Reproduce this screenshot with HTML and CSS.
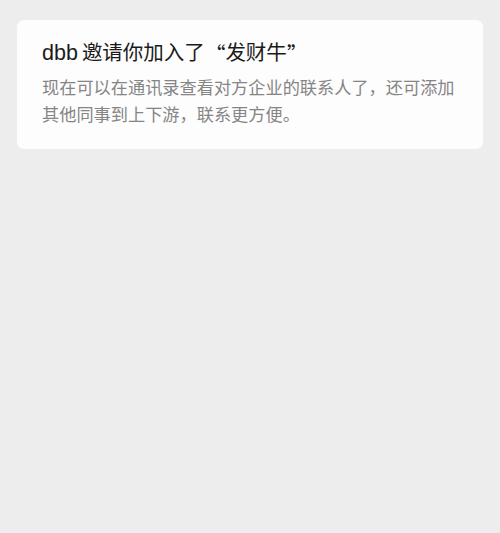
FILE: index.html
```html
<!DOCTYPE html>
<html lang="zh-CN">
<head>
<meta charset="utf-8">
<link rel="stylesheet" href="styles.css">
</head>
<body>
<div class="page">
  <div class="card">
    <div class="title"><span class="latin">dbb</span>邀请你加入了<span class="q qo">“</span>发财牛<span class="q">”</span></div>
    <div class="desc">现在可以在通讯录查看对方企业的联系人了，还可添加其他同事到上下游，联系更方便。</div>
  </div>
</div>
</body>
</html>
```
FILE: styles.css
```css
html, body {
  margin: 0;
  padding: 0;
  background: #ededed;
}
.page {
  width: 500px;
  height: 533px;
  box-sizing: border-box;
  padding: 20px 17px;
  font-family: "Liberation Sans", "Noto Sans CJK SC", sans-serif;
}
.card {
  background: #fdfdfd;
  border-radius: 7px;
  padding: 18px 25px 20px 25px;
}
.title {
  font-size: 20.5px;
  line-height: 30px;
  height: 30px;
  color: #1a1a1a;
}
.latin {
  font-size: 21.5px;
  margin-right: 4px;
}
.q {
  font-family: "Noto Sans CJK SC", sans-serif;
  display: inline-block;
  width: 1em;
  line-height: 30px;
  vertical-align: top;
}
.qo {
  text-align: right;
}
.desc {
  margin-top: 7px;
  font-size: 17.2px;
  line-height: 27px;
  color: #858585;
}
```
